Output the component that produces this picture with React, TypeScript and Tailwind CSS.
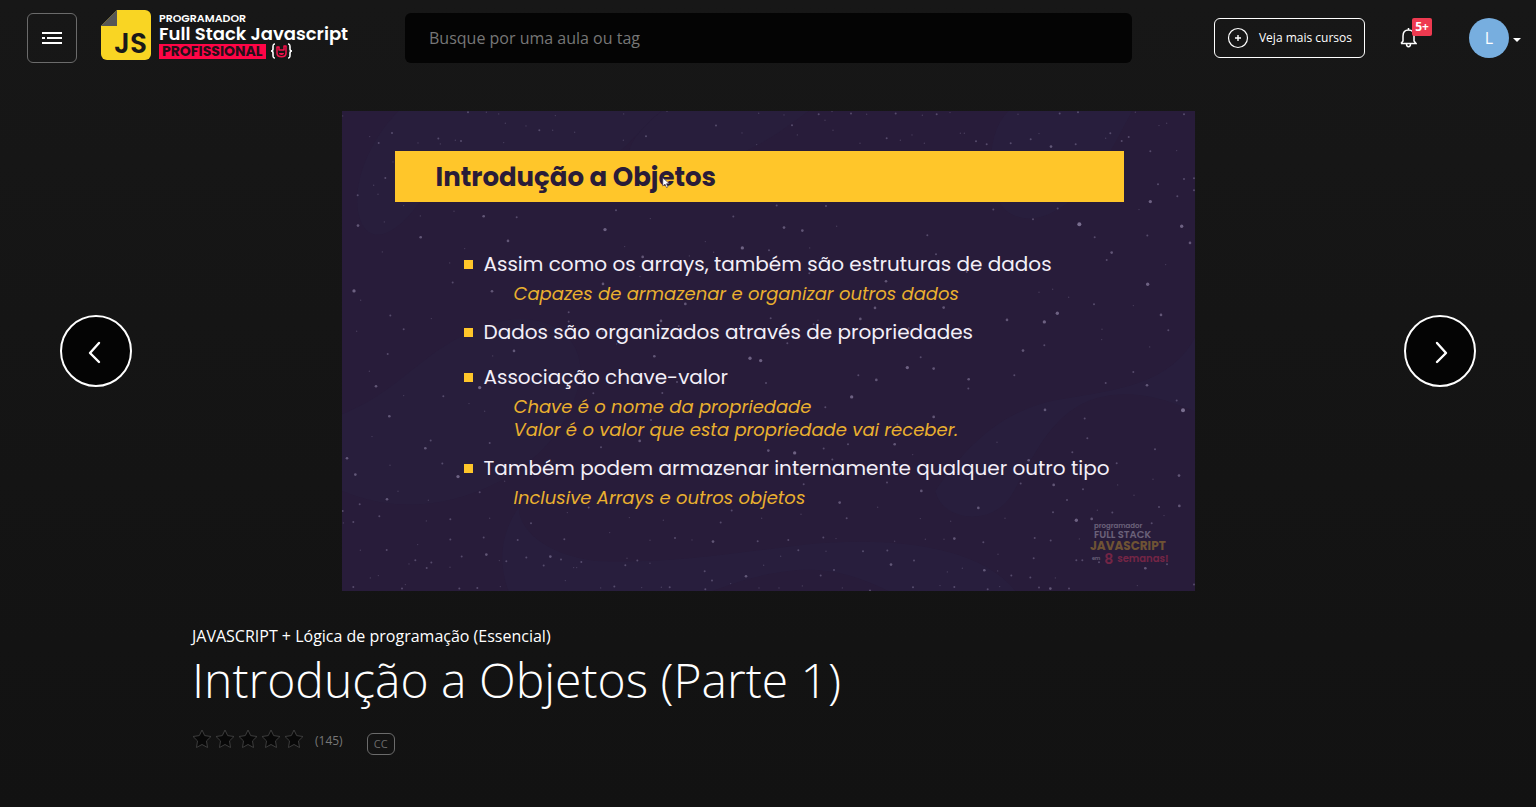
import React from "react";

type Dot = [x: number, y: number, r?: number];

const dotGroups: { dx: number; dy: number; dots: Dot[] }[] = [
  {
    dx: 0,
    dy: -33,
    dots: [
      [2, 48], [378, 37, 3], [433, 37], [470, 42], [640, 47], [845, 42], [975, 34], [1250, 40], [490, 70], [552, 78], [592, 91, 3],
      [632, 91], [912, 109, 3], [844, 121], [1122, 77, 3], [1200, 99], [1244, 134], [698, 97], [150, 99, 3], [83, 110], [110, 129, 3],
      [228, 129], [289, 116, 3], [295, 132], [340, 121], [357, 123, 3], [485, 128], [153, 186], [130, 234, 3], [95, 256],
      [108, 283], [47, 286, 3], [185, 317], [336, 334], [425, 349, 4], [524, 352, 3], [235, 348], [48, 377, 4], [127, 366],
      [236, 412, 4], [498, 423, 4], [789, 389, 5], [822, 331, 3], [925, 356], [1174, 350, 3], [1090, 425], [1201, 444, 5],
      [1281, 451, 3], [1115, 457], [368, 446], [121, 456], [323, 489], [332, 548, 3], [36, 573, 5], [56, 601], [450, 574, 4],
      [145, 647, 3], [268, 656], [185, 688, 3], [44, 694], [680, 637, 3], [680, 665, 3], [783, 552, 4], [1030, 612, 4],
      [957, 663, 4], [1010, 678, 3], [1286, 655, 3], [902, 471, 4], [894, 530], [848, 440], [1042, 468], [782, 694, 3], [824, 732],
    ],
  },
  {
    dx: 1284,
    dy: -33,
    dots: [
      [42, 45], [146, 43, 3], [186, 35], [243, 41, 3], [290, 43], [377, 41, 3], [457, 46], [500, 43, 3], [540, 38], [744, 43],
      [869, 41, 3], [924, 37, 3], [1096, 37], [1242, 43, 3], [66, 76, 3], [165, 61], [189, 91], [82, 105], [350, 115, 3],
      [391, 121], [426, 105], [463, 130], [270, 130], [571, 100], [583, 100], [618, 124, 3], [650, 133, 3], [722, 130, 3],
      [843, 140, 4], [782, 118, 3], [807, 101], [917, 133, 3], [1007, 115], [1021, 100, 3], [1055, 123, 3], [1076, 111, 3],
      [1190, 70], [1167, 77], [1141, 154, 3], [1220, 152], [1242, 237, 3], [1272, 235, 3], [1272, 271, 3], [1164, 253, 3],
      [1222, 289, 3], [1141, 305, 5], [1107, 329], [863, 326, 3], [928, 373, 6], [789, 358, 3], [670, 329, 3], [1235, 379, 5],
      [1260, 429, 4], [1132, 407, 3], [974, 412, 3], [1025, 458, 4], [1010, 480, 3], [1187, 494], [1133, 553, 5], [972, 613, 3],
      [1173, 645, 4], [1090, 617], [862, 640, 5], [711, 660, 4], [823, 666, 5], [896, 592], [848, 568], [807, 577], [521, 623, 4],
      [315, 624, 4], [271, 657, 4], [348, 544, 4], [472, 406, 3], [498, 463, 3], [97, 392, 4], [42, 383, 4], [20, 317, 3],
      [168, 318, 3], [200, 379], [119, 444], [118, 520, 3], [590, 516, 3], [416, 685, 3], [131, 673, 3], [144, 661], [52, 730, 3],
      [996, 688], [1195, 691, 3], [995, 719], [823, 736, 3], [1139, 741],
    ],
  },
  {
    dx: 0,
    dy: 717,
    dots: [
      [137, 12, 3], [82, 64], [102, 109, 4], [185, 137], [304, 139, 3], [142, 199, 4], [90, 260], [250, 295, 4], [266, 272, 3],
      [301, 341, 3], [15, 325, 4], [40, 374, 4], [144, 346], [348, 380, 5], [135, 448, 4], [168, 424], [53, 463, 3], [2, 483, 3],
      [34, 516, 3], [4, 519], [112, 499, 3], [259, 451], [413, 427, 3], [325, 508, 3], [253, 513], [443, 505], [425, 563, 3],
      [325, 569, 3], [227, 584], [134, 600, 3], [55, 601], [220, 631, 3], [201, 642], [254, 654, 3], [268, 638, 3], [433, 614, 4],
      [359, 620, 3], [324, 652], [85, 684], [109, 677], [34, 711, 3], [180, 716, 3], [190, 704], [352, 716, 3], [406, 714, 3],
      [475, 710], [472, 632], [493, 634, 3], [527, 570, 3], [567, 520, 3], [667, 568, 3], [553, 623, 3], [625, 620, 4],
      [657, 629, 3], [605, 647, 3], [695, 653], [704, 653], [718, 636, 3], [850, 646, 3], [886, 632, 3], [855, 625], [924, 640],
      [924, 571], [999, 564, 3], [1050, 570], [1113, 575, 4], [964, 511], [862, 503], [803, 548], [676, 488], [740, 473, 3],
      [1136, 518, 3], [1169, 482, 3], [1259, 505], [1247, 574, 3], [1088, 664, 3], [1212, 679, 4], [1110, 692, 3], [1090, 718, 3],
      [1166, 701], [1265, 646], [1251, 714], [983, 712, 3], [958, 712], [899, 713], [817, 710, 3], [776, 714], [670, 692],
      [516, 3, 4], [452, 18], [937, 19, 4], [1224, 25, 5], [1256, 32, 5], [1272, 99, 3], [754, 130, 3], [961, 129, 3],
      [1005, 96, 3], [413, 113, 5], [428, 184], [381, 161], [443, 279, 3], [927, 210, 3], [893, 273, 4], [777, 292, 3], [1279, 302, 4],
      [488, 394],
    ],
  },
  {
    dx: 1284,
    dy: 717,
    dots: [
      [759, 2, 4], [452, 22, 3], [412, 53, 5], [491, 56, 4], [265, 76, 3], [319, 90, 4], [596, 88, 4], [595, 116, 3], [733, 76, 3],
      [245, 141, 5], [166, 172, 3], [491, 201, 4], [382, 224, 3], [374, 283, 4], [234, 283, 3], [161, 296, 3], [74, 309, 5],
      [187, 329, 3], [428, 314], [825, 180, 4], [944, 206, 3], [952, 265, 3], [907, 307, 3], [1090, 66, 3], [1131, 106, 4],
      [1007, 99, 3], [1220, 152, 3], [1239, 181, 6], [1155, 298, 3], [681, 277], [776, 331, 4], [487, 364, 4], [1040, 340, 3],
      [1227, 377, 4], [1149, 388], [1043, 405], [851, 405, 4], [752, 401, 3], [939, 418, 3], [891, 450, 3], [1092, 436],
      [1167, 471, 3], [1228, 468, 4], [1182, 497], [1027, 488, 3], [982, 481], [919, 511, 5], [965, 507, 4], [849, 487, 3],
      [705, 505], [625, 474, 4], [542, 514], [454, 423, 4], [451, 506], [351, 398, 3], [323, 472], [209, 458, 4], [101, 403, 3],
      [93, 493], [230, 505, 3], [553, 566, 4], [640, 577, 3], [466, 568], [522, 568], [374, 574], [160, 563, 3], [198, 566],
      [55, 570, 3], [168, 604], [85, 601, 3], [32, 619], [279, 604, 3], [352, 602, 3], [432, 632, 3], [363, 644, 4], [192, 660, 3],
      [152, 677, 3], [532, 666], [577, 655], [643, 661, 4], [683, 663], [724, 677, 3], [781, 683, 3], [856, 684], [791, 625, 3],
      [684, 613], [842, 572, 3], [794, 564, 3], [928, 567], [919, 631, 3], [937, 631, 3], [987, 637, 3], [1145, 520, 3],
      [1126, 655, 4], [1191, 643, 3], [1102, 707], [897, 716, 3], [841, 716, 4], [807, 713, 3], [653, 718, 3], [689, 710],
      [553, 711, 3], [429, 712, 3], [510, 707], [300, 722, 3], [217, 714], [97, 708], [27, 714], [1272, 704, 3],
    ],
  },
];

const topics = [
  {
    text: "Assim como os arrays, também são estruturas de dados",
    notes: ["Capazes de armazenar e organizar outros dados"],
  },
  { text: "Dados são organizados através de propriedades", notes: [] },
  {
    text: "Associação chave-valor",
    notes: ["Chave é o nome da propriedade", "Valor é o valor que esta propriedade vai receber."],
  },
  {
    text: "Também podem armazenar internamente qualquer outro tipo",
    notes: ["Inclusive Arrays e outros objetos"],
  },
];

function Starfield() {
  return (
    <svg
      className="absolute inset-0 h-full w-full"
      viewBox="0 0 2559 1440"
      preserveAspectRatio="xMidYMid slice"
      aria-hidden="true"
    >
      <g fill="#281f3e">
        <path d="M170 0C80 90 30 220 50 310C70 400 150 400 250 250C330 130 560 230 760 170C860 120 900 40 960 0Z" opacity=".6" />
        <path d="M960 0H1400C1290 80 1230 130 1000 200C850 190 800 130 960 0Z" opacity=".6" />
        <path d="M2000 0H2370C2300 130 2250 250 2120 310C2020 350 1950 290 1945 180C1945 100 1960 40 2000 0Z" opacity=".8" />
        <path d="M0 910C200 830 250 690 480 630C640 600 740 700 710 820C660 1060 380 1190 190 1180C100 1180 30 1150 0 1140Z" opacity=".6" />
        <path d="M530 1190C460 1290 480 1390 500 1440H1110C1350 1350 1480 1360 1640 1440H2020C1900 1290 1600 1280 1400 1300C1150 1330 980 1360 760 1350C600 1330 530 1250 530 1190Z" opacity=".8" />
        <path d="M2559 680C2480 830 2300 840 2130 870C1950 910 1850 1040 1780 1140C1800 1230 1950 1250 2010 1150C2090 1010 2150 850 2350 850C2440 850 2500 880 2559 900Z" opacity=".8" />
      </g>
      {dotGroups.map((group, index) => (
        <g key={index} fill="#b9aed2" transform={`translate(${group.dx} ${group.dy})`}>
          {group.dots.map(([x, y, r = 2]) => (
            <circle key={`${x}-${y}`} cx={x} cy={y} r={r} opacity={0.08 + r * 0.08} />
          ))}
        </g>
      ))}
    </svg>
  );
}

function Logo() {
  return (
    <a href="#" className="flex items-center gap-2 font-[Poppins,Inter,sans-serif] whitespace-nowrap text-white">
      <span className="relative flex h-[50px] w-[50px] shrink-0 items-end justify-end rounded-md bg-[#f9d523] pr-1 text-[28px] leading-8 font-semibold text-[#191919]">
        <svg className="absolute top-0 left-0 h-4 w-4" viewBox="0 0 16 16" aria-hidden="true">
          <path d="M0 0H16L0 16Z" fill="#171717" />
          <path d="M16 0V16H0Z" fill="#565656" />
        </svg>
        JS
      </span>
      <span className="flex flex-col">
        <span className="text-[11px] leading-[14px] font-semibold">PROGRAMADOR</span>
        <span className="text-[18px] leading-[18px] font-semibold">Full Stack Javascript</span>
        <span className="flex items-center gap-1">
          <span className="bg-[#ff0546] px-[3px] text-[14px] leading-[15px] font-bold text-[#241019]">PROFISSIONAL</span>
          <svg className="h-4 w-[23px]" viewBox="0 0 23 16" fill="none" aria-hidden="true">
            <path d="M5 1C3 1 3 2 3 4V6C3 7 2 8 1 8C2 8 3 9 3 10V12C3 14 3 15 5 15" stroke="#fff" strokeWidth="1.6" />
            <path d="M18 1C20 1 20 2 20 4V6C20 7 21 8 22 8C21 8 20 9 20 10V12C20 14 20 15 18 15" stroke="#fff" strokeWidth="1.6" />
            <path d="M7 4V10C7 15 16 15 16 10V3H14V7H9V4Z" stroke="#f5124b" strokeWidth="1.5" strokeLinejoin="round" />
            <path d="M9 10H14C14 12.500 9 12.500 9 10Z" fill="#f5124b" />
          </svg>
        </span>
      </span>
    </a>
  );
}

function Header() {
  return (
    <header className="flex h-[75px] items-center pr-[15px] pl-[27px]">
      <button
        type="button"
        aria-label="Menu"
        className="mr-6 flex h-[50px] w-[50px] shrink-0 items-center justify-center rounded-md border border-[#6b6b6b]"
      >
        <svg className="h-[14px] w-5" viewBox="0 0 20 14" stroke="#fff" strokeWidth="2" aria-hidden="true">
          <path d="M0 2H20M0 7H3M5 7H20M0 12H20" />
        </svg>
      </button>
      <div className="mr-[60px] w-[244px] shrink-0 pb-[5px]">
        <Logo />
      </div>
      <input
        type="search"
        aria-label="Busque por uma aula ou tag"
        placeholder="Busque por uma aula ou tag"
        className="h-[50px] min-w-0 flex-1 rounded-md bg-[#040404] px-6 text-base text-white outline-none placeholder:text-[#777777]"
      />
      <button
        type="button"
        className="ml-[82px] flex h-10 shrink-0 items-center gap-[10px] rounded-md border border-white px-3 text-xs font-medium text-white"
      >
        <svg className="h-[22px] w-[22px]" viewBox="0 0 22 22" fill="none" stroke="#fff" aria-hidden="true">
          <circle cx="11" cy="11" r="9.500" strokeWidth="1.200" />
          <path d="M11 8V14M8 11H14" strokeWidth="1.400" />
        </svg>
        Veja mais cursos
      </button>
      <button type="button" aria-label="Notificações" className="relative ml-[35px] shrink-0">
        <svg className="h-5 w-[17px]" viewBox="0 0 17 20" fill="none" stroke="#fff" strokeWidth="1.500" aria-hidden="true">
          <path d="M1 15.500H16L14 13V8C14 4 12 2 8.500 2S3 4 3 8V13L1 15.500M8.500 2V0M6.500 16C6.500 19.500 10.500 19.500 10.500 16" />
        </svg>
        <span className="absolute -top-[10px] left-3 flex h-[18px] w-5 items-center justify-center rounded-xs bg-[#ee3a50] text-xs font-bold text-white">
          5+
        </span>
      </button>
      <button type="button" aria-label="Conta" className="ml-[52px] flex shrink-0 items-center gap-1">
        <span className="flex h-10 w-10 items-center justify-center rounded-full bg-[#77aedf] text-base text-white">L</span>
        <svg className="mt-1 h-1 w-2" viewBox="0 0 8 4" aria-hidden="true">
          <path d="M0 0H8L4 4Z" fill="#fff" />
        </svg>
      </button>
    </header>
  );
}

function Slide() {
  return (
    <section className="relative aspect-video w-full max-w-[853px] overflow-hidden bg-[#281c3a] pt-10 pr-[71px] pl-[53px] font-[Poppins,Inter,sans-serif]">
      <Starfield />
      <div className="relative">
        <h2 className="flex h-[51px] items-center bg-[#ffc62a] pt-[2px] pl-[41px] text-[26px] font-bold text-[#2a1c38]">
          Introdução a Objetos
        </h2>
        <svg className="absolute top-[26px] left-[267px] h-3 w-[9px]" viewBox="0 0 12 16" aria-hidden="true">
          <path d="M1 1V12L4 9.500L6 14L8 13L6 9H10Z" fill="#fff" stroke="#33233c" strokeWidth=".8" />
        </svg>
      </div>
      <ul className="relative mt-[47px] flex flex-col gap-3 pl-[69px] whitespace-nowrap">
        {topics.map((topic) => (
          <li key={topic.text}>
            <p className="mb-[2px] flex items-center gap-[11px] text-[20px] leading-[31px] text-[#f3eff8]">
              <span className="h-[9px] w-[9px] shrink-0 bg-[#ffc62a]" />
              {topic.text}
            </p>
            {topic.notes.map((note) => (
              <p key={note} className="pl-[50px] text-[18px] leading-[23px] text-[#eab02f] italic">
                {note}
              </p>
            ))}
          </li>
        ))}
      </ul>
      <div className="absolute right-[26px] bottom-[25px] flex flex-col font-semibold opacity-40">
        <span className="pl-1 text-[7px] leading-[8px] text-[#cfc8d8]">programador</span>
        <span className="pl-1 text-[10px] leading-[10px] text-[#cfc8d8]">FULL STACK</span>
        <span className="text-[12px] leading-[12px] font-bold text-[#d9a62c]">JAVASCRIPT</span>
        <span className="flex items-center gap-1 pl-[2px] text-[10px] leading-[14px] text-[#e63458]">
          <span className="text-[5px] leading-[12px] text-[#cfc8d8]">em</span>
          <span className="text-[14px]">8</span>
          semanas!
        </span>
      </div>
    </section>
  );
}

function ArrowButton({ label, points }: { label: string; points: string }) {
  return (
    <button
      type="button"
      aria-label={label}
      className="flex h-[72px] w-[72px] shrink-0 items-center justify-center rounded-full border-2 border-white bg-[#040404]"
    >
      <svg className="mt-1 h-6 w-6" viewBox="0 0 24 24" fill="none" stroke="#fff" strokeWidth="2.400" aria-hidden="true">
        <polyline points={points} strokeLinecap="round" strokeLinejoin="round" />
      </svg>
    </button>
  );
}

function RatingStar() {
  return (
    <svg className="h-5 w-5" viewBox="0 0 20 20" aria-hidden="true">
      <path
        d="M10 1L12.700 6.600L19 7.500L14.500 11.900L15.500 18.500L10 15.500L4.500 18.500L5.500 11.900L1 7.500L7.300 6.600Z"
        fill="#080808"
        stroke="#3d3d3d"
        strokeLinejoin="round"
      />
    </svg>
  );
}

export default function App() {
  return (
    <div className="min-h-screen bg-linear-to-b from-[#171717] to-[#121212] font-['Open_Sans',sans-serif] text-white">
      <Header />
      <main className="pt-9">
        <div className="flex items-center justify-between gap-8 px-[60px]">
          <ArrowButton label="Aula anterior" points="15,2 6,12 15,21" />
          <Slide />
          <ArrowButton label="Próxima aula" points="9,2 18,12 9,21" />
        </div>
        <div className="px-[12.5%] pt-[33px] pb-12">
          <p className="text-base leading-6 font-medium">JAVASCRIPT + Lógica de programação (Essencial)</p>
          <h1 className="text-[48px] leading-[64px] font-light">Introdução a Objetos (Parte 1)</h1>
          <div className="mt-[17px] flex items-start">
            <div className="flex gap-[3px]" role="img" aria-label="Sem avaliação">
              <RatingStar />
              <RatingStar />
              <RatingStar />
              <RatingStar />
              <RatingStar />
            </div>
            <span className="ml-[11px] text-xs leading-6 text-[#777777]">(145)</span>
            <span className="mt-1 ml-6 flex h-[22px] w-7 items-center justify-center rounded-md border border-[#6b6b6b] text-[11px] text-[#6b6b6b]">
              CC
            </span>
          </div>
        </div>
      </main>
    </div>
  );
}
